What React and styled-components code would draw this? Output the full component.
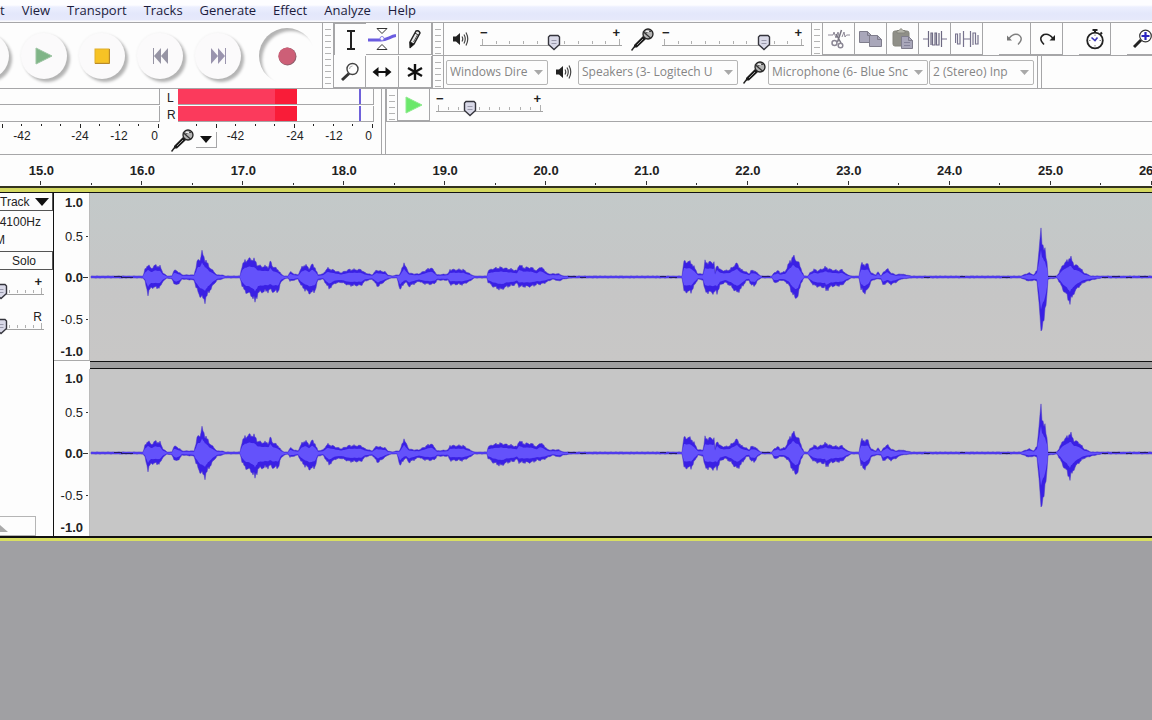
import React, { useState } from "react";
import styled, { createGlobalStyle, css } from "styled-components";

const UI_FONT = '"Open Sans", "Noto Sans", sans-serif';
const SCALE_FONT = '"Liberation Sans", Arial, sans-serif';
const EDGE = "#a6a6a8";

const GlobalStyle = createGlobalStyle`
  * { box-sizing: border-box; }
  body { margin: 0; background: #a0a0a3; overflow-x: hidden; font-family: ${SCALE_FONT}; color: #222; }
  button { font: inherit; color: inherit; padding: 0; border: 0; background: none; }
  svg { display: block; flex: none; }
`;

/* ---------- shell ---------- */

const Page = styled.div`
  min-height: 100vh;
  overflow: hidden;
`;

const MenuBar = styled.nav`
  display: flex;
  gap: 17px;
  height: 23px;
  background: linear-gradient(#fdfdff 5px, #eceffe 7px, #e3e7fb 14px, #e6e9fb 20px, #fafafc 21px);
  border-bottom: 1px solid ${EDGE};
`;

const MenuItem = styled.button`
  height: 20px;
  line-height: 20px;
  font-family: ${UI_FONT};
  font-size: 13px;
  color: #1c1c3c;
`;

const Dock = styled.header`
  background: #fdfdfd;
`;

const DockRow = styled.div`
  display: flex;
  height: 66px;
  border-bottom: 1px solid ${EDGE};
`;

const DockColumn = styled.div`
  display: flex;
  flex-direction: column;
  flex: 1;
  min-width: 0;
`;

const Bar = styled.div`
  display: flex;
  align-items: center;
  height: ${(p) => (p.$last ? 32 : 33)}px;
  border-bottom: ${(p) => (p.$last ? "none" : `1px solid ${EDGE}`)};
  overflow: hidden;
`;

const Grip = styled.div`
  flex: none;
  align-self: stretch;
  width: 12px;
  border: solid ${EDGE};
  border-width: 0 1px;
  background: repeating-linear-gradient(#fdfdfd 0 5px, #b4b4b4 5px 6px) content-box;
  padding: 1px 2px;
`;

const Spacer = styled.div`
  flex: none;
  width: ${(p) => p.$w}px;
`;

const BarEnd = styled.div`
  flex: none;
  align-self: stretch;
  width: 5px;
  border: solid ${EDGE};
  border-width: 0 1px;
`;

/* ---------- transport ---------- */

const Transport = styled.div`
  flex: none;
  display: flex;
  align-items: center;
  justify-content: flex-end;
  gap: 12px;
  width: 322px;
  padding-right: 7px;
  overflow: hidden;
`;

const RoundButton = styled.button`
  flex: none;
  display: grid;
  place-items: center;
  width: 46px;
  height: 46px;
  border-radius: 50%;
  background: #fbfafb;
  box-shadow: 3px 3px 3px #b4b4b4, 0 0 3px #f0f0f0;
  ${(p) =>
    p.$sunken &&
    css`
      width: 56px;
      height: 56px;
      margin-left: 6px;
      background: #fdfdfd;
      box-shadow: inset 4px 4px 3px -1px #b4b4b4;
    `}
`;

/* ---------- tool buttons ---------- */

const ToolGrid = styled.div`
  flex: none;
  display: grid;
  grid-template-columns: 32px 33px 33px;
  grid-template-rows: 33px 32px;
`;

const ToolButton = styled.button`
  flex: none;
  display: grid;
  place-items: center;
  width: ${(p) => (p.$fill ? "100%" : "32px")};
  height: 32px;
  border: solid ${EDGE};
  border-width: ${(p) => (p.$pressed ? "1px 0 0 1px" : "0 1px 1px 0")};
`;

/* ---------- sliders ---------- */

const SliderRoot = styled.label`
  flex: none;
  display: block;
  position: relative;
  width: ${(p) => p.$w}px;
  height: 25px;
`;

const SliderEnds = styled.span`
  display: flex;
  justify-content: space-between;
  height: 9px;
  line-height: 12px;
  font-size: ${(p) => (p.$plain ? 12 : 13)}px;
  font-weight: ${(p) => (p.$plain ? 400 : 700)};
  margin-right: 2px;
`;

const SliderInput = styled.input`
  appearance: none;
  position: absolute;
  inset: 7px 0 0 0;
  width: 100%;
  height: 18px;
  margin: 0;
  background: transparent;
  &::-webkit-slider-thumb { appearance: none; width: 13px; height: 16px; background: transparent; }
`;

const SliderThumb = styled.svg`
  position: absolute;
  top: 7px;
  margin-left: -7px;
`;

function Slider({ label, width, start, ends = ["−", "+"], plain }) {
  const [value, setValue] = useState(start);
  const ticks = Array.from({ length: 11 }, (_, i) => Math.round(2 + (i * (width - 5)) / 10));
  return (
    <SliderRoot $w={width}>
      <SliderEnds $plain={plain}>
        <span>{ends[0]}</span>
        <span>{ends[1]}</span>
      </SliderEnds>
      <svg width={width} height="12" aria-hidden="true" shapeRendering="crispEdges">
        {ticks.map((x, i) => (
          <rect key={x} x={x} y={i % 10 ? 5 : 3} width="1" height={i % 10 ? 3 : 6} fill="#b0b0b0" />
        ))}
        <rect x="0" y="9" width={width} height="1" fill="#a3a3a3" />
      </svg>
      <SliderThumb width="14" height="17" style={{ left: `${value}%` }} aria-hidden="true">
        <path d="M3 1.5H11L12.5 3V10.500L7 15.500L1.500 10.500V3Z" fill="#d9d9e8" stroke="#35353d" strokeWidth="1.4" />
        <path d="M4.500 6.500H9.500M4.500 9.500H9.500" stroke="#9a9aac" />
      </SliderThumb>
      <SliderInput
        type="range"
        min="0"
        max="100"
        value={value}
        aria-label={label}
        onChange={(e) => setValue(Number(e.target.value))}
      />
    </SliderRoot>
  );
}

/* ---------- drop-downs ---------- */

const SelectBox = styled.div`
  flex: none;
  position: relative;
  width: ${(p) => p.$w}px;
  height: 25px;
  margin-right: 1px;
`;

const SelectField = styled.select`
  appearance: none;
  width: 100%;
  height: 25px;
  padding: 0 19px 1px 3px;
  border: 1px solid #b5b5b5;
  border-radius: 2px;
  background: #fdfdfd;
  color: #858585;
  font-family: ${UI_FONT};
  font-size: 12px;
`;

const SelectArrow = styled.svg`
  position: absolute;
  right: 5px;
  top: 10px;
  pointer-events: none;
`;

function Select({ label, width, value }) {
  return (
    <SelectBox $w={width}>
      <SelectField aria-label={label} defaultValue={value}>
        <option>{value}</option>
      </SelectField>
      <SelectArrow width="9" height="5" aria-hidden="true">
        <path d="M0 0H9L4.500 5Z" fill="#a9a9a9" />
      </SelectArrow>
    </SelectBox>
  );
}

/* ---------- icons ---------- */

const Icon = ({ w = 24, h = 24, children }) => (
  <svg width={w} height={h} viewBox={`0 0 ${w} ${h}`} fill="none" aria-hidden="true">
    {children}
  </svg>
);

const PlayIcon = ({ w = 18, fill = "#7fb587", edge = "#9cc4a2" }) => (
  <Icon w={w} h={18}>
    <path d={`M1 1L${w - 1} 9L1 17Z`} fill={fill} stroke={edge} />
  </Icon>
);
const PauseIcon = () => (
  <Icon w={16} h={16}><path d="M2 1H6V15H2ZM10 1H14V15H10Z" fill="#8888b0" /></Icon>
);
const StopIcon = () => (
  <Icon w={16} h={16}>
    <rect x="1" y="1" width="14" height="14" fill="#f7c325" stroke="#dfae2c" />
    <path d="M1 15.5H15.5V1" stroke="#b98a2a" />
  </Icon>
);
const SkipStartIcon = () => (
  <Icon w={16} h={16}>
    <path d="M1.5 0V16" stroke="#9694a4" />
    <path d="M9 0V16L2 8ZM16 0V16L9 8Z" fill="#9694a4" />
  </Icon>
);
const SkipEndIcon = () => (
  <Icon w={16} h={16}>
    <path d="M15.5 0V16" stroke="#9a94ae" />
    <path d="M1 0V16L8 8ZM8 0V16L15 8Z" fill="#9a94ae" />
  </Icon>
);
const RecordIcon = () => (
  <Icon w={20} h={20}>
    <circle cx="10.5" cy="10.5" r="9" fill="#8d5f6c" />
    <circle cx="10" cy="10" r="8.6" fill="#cd5f77" />
  </Icon>
);
const SelectionIcon = () => (
  <Icon w={22} h={22}><path d="M7 2H15M11 2V20M7 20H15" stroke="#222" strokeWidth="2" /></Icon>
);
const EnvelopeIcon = () => (
  <Icon w={28} h={24}>
    <path d="M9 1.500H19L14 6.500Z" fill="#fff" stroke="#333" />
    <path d="M9 22.500H19L14 17.500Z" fill="#fff" stroke="#333" />
    <path d="M0 13H13C19 13 22 9.500 28 8.500" stroke="#6a5ce0" strokeWidth="3" />
    <circle cx="14" cy="11.500" r="2" fill="#fff" stroke="#8c80e8" />
  </Icon>
);
const DrawIcon = () => (
  <Icon w={20} h={22}>
    <path d="M5 14L11 3Q14 2 15 5L9 16L5.500 19Z" fill="#e8e8e8" stroke="#222" strokeWidth="1.500" />
    <path d="M5 14L9 16L5 20ZM10 5L14 7.500" fill="#111" stroke="#222" />
    <path d="M8.500 14L13 6" stroke="#555" />
  </Icon>
);
const MagnifierIcon = () => (
  <Icon w={20} h={20}>
    <path d="M2 18L9 11.500" stroke="#333" strokeWidth="3" />
    <circle cx="12.500" cy="7" r="5.500" fill="#fff" stroke="#444" strokeWidth="1.400" />
    <path d="M9.500 7Q9.500 4 12.500 4" stroke="#aaa" />
  </Icon>
);
const TimeShiftIcon = () => (
  <Icon w={20} h={12}>
    <path d="M3 6H17" stroke="#111" strokeWidth="2" />
    <path d="M6.500 1V11L0.500 6ZM13.500 1V11L19.500 6Z" fill="#111" />
  </Icon>
);
const MultiToolIcon = () => (
  <Icon w={18} h={18}>
    <path d="M9 1V17M2 5L16 13M16 5L2 13" stroke="#111" strokeWidth="2.400" />
  </Icon>
);
const SpeakerIcon = () => (
  <Icon w={18} h={16}>
    <path d="M1 5.500H4L8 2V14L4 10.500H1Z" fill="#222" />
    <path d="M10 5.500Q11.500 8 10 10.500M12 3.500Q14.500 8 12 12.500M14 1.500Q17.500 8 14 14.500" stroke="#444" strokeWidth="1.200" />
  </Icon>
);
const MicIcon = () => (
  <Icon w={23} h={23}>
    <path d="M0.500 22.500L4 18" stroke="#222" strokeWidth="1.500" />
    <path d="M3 17L12 8L15 11L6 19.500L3 19.500Z" fill="#1b1b1b" />
    <path d="M6 17L12 11" stroke="#999" />
    <circle cx="17" cy="6" r="5" fill="#b5b5b5" stroke="#222" strokeWidth="1.300" />
    <path d="M12 3.500L20 10.500M14 6Q17 2 20 3.500" stroke="#333" strokeWidth="1.200" />
    <path d="M15 3.500H18" stroke="#eee" strokeWidth="1.500" />
  </Icon>
);
const CutIcon = () => (
  <Icon w={24} h={20}>
    <path d="M1 6H6L7 3L9 9L11 3L12 7M15 8L17 3L18 8L19.500 6H23" stroke="#8f8a98" />
    <path d="M14.500 1L10.500 13M9 5L14 14" stroke="#777480" strokeWidth="1.500" />
    <circle cx="7.500" cy="14" r="2.500" stroke="#8a8694" strokeWidth="1.500" />
    <circle cx="13.500" cy="16.500" r="2.300" stroke="#8a8694" strokeWidth="1.500" />
  </Icon>
);
const Doc = ({ x, y, w, h }) => (
  <g>
    <path d={`M${x} ${y}H${x + w - 4}L${x + w} ${y + 4}V${y + h}H${x}Z`} fill="#a9a7ba" stroke="#7f7d8c" />
    <path d={`M${x + w - 4} ${y}V${y + 4}H${x + w}`} stroke="#7f7d8c" />
  </g>
);
const CopyIcon = () => (
  <Icon w={24} h={18}>
    <Doc x={0.5} y={1.5} w={12} h={11} />
    <Doc x={10.5} y={5.5} w={12} h={11} />
  </Icon>
);
const PasteIcon = () => (
  <Icon w={22} h={22}>
    <rect x="1" y="3" width="16" height="15" rx="2" fill="#8f8f88" stroke="#84847c" />
    <path d="M5 5V2.500H7L9 0.500L11 2.500H13V5Z" fill="#b5b5ac" stroke="#84847c" />
    <Doc x={9.5} y={8.5} w={11} h={12} />
    <path d="M12 14.500H18M12 17.500H18" stroke="#85839a" />
  </Icon>
);
const TrimIcon = () => (
  <Icon w={24} h={18}>
    <path d="M0 9H5M19 9H24" stroke="#77738e" />
    <path d="M5.500 1V17M8 15V3H9.500V15H12V3H13.500V15H16V3M18.500 1V17" stroke="#6d6982" strokeWidth="1.200" />
  </Icon>
);
const SilenceIcon = () => (
  <Icon w={24} h={18}>
    <path d="M0.500 13V4H2.500V14H5V3M8.500 1V17M8.500 9H15.500M15.500 1V17M18 15V3H20.500V14H23V5" stroke="#77738e" strokeWidth="1.200" />
  </Icon>
);
const UndoIcon = () => (
  <Icon w={18} h={14}>
    <path d="M3 6.500Q7 1 12 2.500Q18.500 6 12 12.500" stroke="#808080" strokeWidth="1.400" />
    <path d="M1 3.500V8.500H6Z" fill="#777" />
  </Icon>
);
const RedoIcon = () => (
  <Icon w={18} h={14}>
    <path d="M15 6.500Q11 1 6 2.500Q-0.500 6 6 12.500" stroke="#222" strokeWidth="1.500" />
    <path d="M17 3V8.500H11.500Z" fill="#222" />
  </Icon>
);
const TimerIcon = () => (
  <Icon w={20} h={22}>
    <path d="M7.500 2H12.500M10 1V5M15.500 4.500L17 6" stroke="#222" strokeWidth="2" />
    <circle cx="10" cy="12.500" r="7.800" fill="#fff" stroke="#222" strokeWidth="1.800" />
    <path d="M6.500 9.500L10 12.500L12.500 9.500" stroke="#3a35b8" strokeWidth="1.600" />
    <path d="M10 6.500V8M10 17V18.500M4 12.500H5.500M14.500 12.500H16" stroke="#888" />
  </Icon>
);
const ZoomInIcon = () => (
  <Icon w={20} h={20}>
    <path d="M1 18L8 11" stroke="#222" strokeWidth="3" />
    <circle cx="12.500" cy="7" r="5.800" fill="#fff" stroke="#333" strokeWidth="1.200" />
    <path d="M8.500 7H16.500M12.500 3V11" stroke="#2a25c0" strokeWidth="2.200" />
  </Icon>
);

/* ---------- level meters ---------- */

const Meters = styled.div`
  flex: none;
  display: flex;
  width: 386px;
  border-right: 1px solid ${EDGE};
`;

const PlayMeter = styled.section`
  width: 160px;
`;

const RecordMeter = styled.section`
  width: 222px;
  padding-left: 7px;
  border-right: 1px solid ${EDGE};
`;

const ChannelRow = styled.div`
  display: flex;
  height: 16px;
  margin-bottom: 1px;
  padding-right: ${(p) => (p.$inset ? 7 : 0)}px;
`;

const ChannelName = styled.span`
  width: 11px;
  line-height: 18px;
  font-size: 12px;
`;

const LevelTrack = styled.div`
  flex: 1;
  display: flex;
  border: solid ${EDGE};
  border-width: 0 1px 1px 0;
`;

const LevelFill = styled.div`
  width: ${(p) => p.$w}px;
  background: ${(p) => p.$color};
`;

const PeakHold = styled.div`
  width: 2px;
  margin-left: 62px;
  background: #6f61da;
`;

const MeterTicks = styled.div`
  display: flex;
  justify-content: flex-end;
  height: 8px;
`;

const MeterFoot = styled.div`
  display: flex;
  align-items: center;
  height: 18px;
`;

const MeterLabel = styled.span`
  flex: none;
  width: ${(p) => p.$w}px;
  text-align: ${(p) => p.$align || "center"};
  font-size: 12px;
  line-height: 14px;
  margin-bottom: 8px;
`;

const MeterMenu = styled.button`
  flex: none;
  display: grid;
  place-items: center;
  width: 21px;
  height: 16px;
  border: solid ${EDGE};
  border-width: 0 1px 1px 0;
`;

const TICKS = [-176, -156, -137, -117, -98, -78, -59, -39, -20, 0];

const Ticks = ({ width, count }) => (
  <svg width={width} height="8" shapeRendering="crispEdges" aria-hidden="true">
    {TICKS.slice(-count).map((offset, i) => {
      const major = (count - 1 - i) % 4 === 0;
      return <rect key={offset} x={width - 2 + offset} y="1" width="1" height={major ? 4 : 2} fill="#222" />;
    })}
  </svg>
);

/* ---------- timeline ---------- */

const Timeline = styled.div`
  overflow: hidden;
  background: #fdfdfd;
  border-bottom: 2px solid #33331f;
`;

const TimelineGrid = styled.div`
  display: grid;
  grid-template-columns: repeat(12, 1fr);
  width: calc(100% + 59px);
  height: 31px;
  margin-left: -9px;
`;

const Second = styled.div`
  display: grid;
  grid-template-columns: 1fr 1px;
  grid-template-rows: 26px 5px;
  justify-items: center;
  font-size: 13px;
  font-weight: 700;
  line-height: 32px;
`;

const SecondLabel = styled.span`
  grid-column: 1 / 3;
`;

const Tick = styled.i`
  width: 1px;
  height: ${(p) => (p.$minor ? 2 : 4)}px;
  margin-top: ${(p) => (p.$minor ? 2 : 0)}px;
  background: #333;
`;

/* ---------- track ---------- */

const TrackFrame = styled.main`
  border: solid #d9df62;
  border-width: 4px 0 3px;
  border-top-color: #d3d860;
`;

const Track = styled.div`
  display: flex;
  height: 346px;
  border: solid #111;
  border-width: 1px 0 2px;
  background: #fdfdfd;
`;

const TrackPanel = styled.aside`
  flex: none;
  display: flex;
  flex-direction: column;
  width: 54px;
  border-right: 1px solid #111;
  overflow: hidden;
  font-size: 12px;
`;

const TrackTitle = styled.button`
  display: flex;
  align-items: center;
  justify-content: space-between;
  height: 18px;
  padding-right: 3px;
  border: solid #555;
  border-width: 0 1px 1px 0;
`;

const TrackFormat = styled.div`
  height: 40px;
  padding-top: 2px;
  line-height: 18px;
`;

const FormatLine = styled.div`
  display: flex;
  justify-content: flex-end;
  width: ${(p) => p.$w}px;
  overflow: hidden;
`;

const SoloButton = styled.button`
  height: 19px;
  padding-right: 4px;
  border: solid #555;
  border-width: 1px 1px 1px 0;
`;

const PanelSlider = styled.div`
  display: flex;
  justify-content: flex-end;
  width: 44px;
  height: 35px;
  padding-top: 6px;
`;

const CollapseButton = styled.button`
  width: 36px;
  height: 20px;
  margin-top: auto;
  padding-top: 4px;
  border: solid #b5b5b5;
  border-width: 1px 1px 1px 0;
`;

const Channels = styled.div`
  flex: 1;
  min-width: 0;
`;

const Channel = styled.section`
  display: flex;
  height: ${(p) => (p.$first ? 176 : 167)}px;
`;

const LevelRuler = styled.div`
  display: grid;
  grid-template-rows: 18px 50px 33px 50px 15px;
  align-items: center;
  align-content: start;
  width: 36px;
  height: 167px;
  border-right: 1px solid #bbb;
  font-size: 13px;
`;

const LevelMark = styled.div`
  display: flex;
  align-items: center;
  justify-content: flex-end;
  padding-right: ${(p) => (p.$edge ? 6 : 0)}px;
  font-weight: ${(p) => (p.$strong ? 700 : 400)};
  &::after {
    content: "";
    display: ${(p) => (p.$edge ? "none" : "block")};
    width: ${(p) => (p.$strong ? 5 : 2)}px;
    height: 1px;
    margin-right: 1px;
    margin-left: ${(p) => (p.$strong ? 0 : 3)}px;
    background: #333;
  }
`;

const RulerColumn = styled.div`
  flex: none;
  width: 36px;
  height: 168px;
  border-bottom: ${(p) => (p.$first ? "1px solid #aaa" : "none")};
`;

const WaveArea = styled.div`
  flex: 1;
  min-width: 0;
`;

const WaveCanvas = styled.div`
  height: ${(p) => (p.$first ? 168 : 167)}px;
  overflow: hidden;
  background: ${(p) => (p.$first ? "linear-gradient(#c3c9c9, #c6c6c6 60%, #c8c7c6)" : "#c6c6c6")};
`;

const Divider = styled.div`
  height: 8px;
  background: #9f9f9f;
  border: solid #111;
  border-width: 1px 0;
`;

/* x position, peak above the axis, peak below the axis */
const ENVELOPE = [
  [0,1,1],[20,1,1],[40,1,1],[52,1,1],[54,7,4],[57,12,16],[60,8,10],[64,11,10],[69,10,10],[72,4,4],[76,1,1],[81,1,2],[83,7,6],[85,6,8],[89,4,5],[91,2,2],
  [103,2,3],[105,9,10],[107,17,14],[109,17,18],[111,23,20],[114,17,22],[118,10,14],[122,6,8],[126,2,3],[131,2,2],[134,1,1],[149,1,1],[151,11,8],[154,15,14],
  [157,17,15],[162,17,19],[164,15,24],[167,11,15],[172,10,14],[178,10,13],[179,15,12],[182,10,14],[187,7,14],[190,3,5],[193,1,2],[197,1,1],[199,5,4],[203,3,3],
  [207,2,2],[210,8,8],[214,12,12],[218,8,15],[221,12,15],[224,9,13],[227,2,3],[232,3,2],[236,8,8],[238,8,11],[244,6,6],[250,4,5],[258,7,8],[270,7,8],[274,4,4],
  [281,2,2],[286,7,8],[287,6,9],[294,5,4],[297,2,2],[301,1,1],[306,2,1],[308,2,8],[309,3,13],[311,8,9],[313,14,6],[315,9,5],[318,4,9],[322,3,7],[328,3,4],
  [332,5,6],[340,9,7],[344,5,6],[346,2,3],[357,3,3],[359,7,7],[372,7,7],[379,3,4],[383,1,1],[396,1,1],[397,6,5],[402,8,9],[410,9,12],[416,8,9],[422,7,8],
  [426,6,6],[428,12,9],[432,9,9],[440,9,9],[446,6,7],[449,10,7],[453,7,6],[457,3,4],[462,3,2],[468,3,4],[472,1,2],[480,1,1],[510,1,1],[570,1,1],[591,1,1],
  [593,15,14],[600,14,14],[604,8,7],[607,3,2],[612,3,3],[614,14,14],[623,14,15],[624,4,14],[626,12,15],[629,7,8],[634,6,5],[639,7,8],[642,10,11],[646,13,15],
  [650,7,11],[655,5,4],[658,3,3],[660,6,8],[664,6,8],[667,3,3],[670,1,1],[681,1,1],[683,4,5],[687,6,5],[689,4,3],[694,5,4],[698,13,8],[702,20,17],[704,17,20],
  [707,15,18],[710,8,6],[713,1,1],[717,1,1],[719,4,4],[723,7,8],[727,6,9],[734,9,10],[735,9,13],[740,7,9],[748,6,8],[751,7,8],[755,3,4],[760,1,1],[768,1,1],
  [770,12,12],[773,12,15],[777,12,12],[780,4,4],[785,2,2],[787,5,2],[790,1,2],[792,4,8],[796,8,5],[800,4,7],[805,2,5],[810,3,2],[820,1,1],[870,1,1],[930,1,1],
  [938,4,4],[943,2,3],[946,7,4],[948,25,25],[950,44,56],[951,35,45],[954,24,36],[956,14,17],[957,1,2],[966,1,1],[969,6,6],[972,12,12],[976,15,18],[979,19,24],
  [983,12,15],[988,10,9],[993,4,5],[1000,1,3],[1010,1,1],[1030,1,1],[1062,1,1],
];

const QUIET = [[24, 8], [31, 12], [478, 8], [490, 6], [570, 6], [579, 8], [672, 8], [834, 6], [870, 5], [912, 8], [958, 8], [1012, 6], [1022, 8], [1036, 6], [1050, 8]];

function buildWave(scale, rough) {
  const top = [];
  const bottom = [];
  let k = 0;
  for (let x = 0; x <= 1062; x += 1) {
    while (k < ENVELOPE.length - 2 && ENVELOPE[k + 1][0] <= x) k += 1;
    const [x0, u0, d0] = ENVELOPE[k];
    const [x1, u1, d1] = ENVELOPE[k + 1];
    const t = Math.min(1, (x - x0) / (x1 - x0));
    const wobble = 1 + rough * Math.sin(x * 2.3) * Math.cos(x * 1.1);
    const up = (u0 + (u1 - u0) * t) * scale * wobble;
    const down = (d0 + (d1 - d0) * t) * scale * (2 - wobble);
    top.push(`${x + 1} ${(84 - Math.max(0.6, up)).toFixed(1)}`);
    bottom.unshift(`${x + 1} ${(84 + Math.max(0.6, down)).toFixed(1)}`);
  }
  return `M${top.join("L")}L${bottom.join("L")}Z`;
}

const PEAK_PATH = buildWave(1.04, 0.18);
const RMS_PATH = buildWave(0.6, 0.06);

const Waveform = () => (
  <svg width="100%" height="168" viewBox="0 0 1062 168" preserveAspectRatio="none" role="img" aria-label="Waveform">
    <path d={PEAK_PATH} fill="#3a20e4" stroke="#4a38c8" strokeWidth="0.5" />
    <path d={RMS_PATH} fill="#6452fb" />
    {QUIET.map(([x, w], i) => (
      <rect key={x} x={x} y={i % 2 ? 84 : 83} width={w} height="1" fill="#241a6c" />
    ))}
  </svg>
);

const LEVELS = ["1.0", "0.5", "0.0", "-0.5", "-1.0"];

function ChannelView({ first }) {
  return (
    <Channel $first={first}>
      <RulerColumn $first={first}>
        <LevelRuler>
          {LEVELS.map((level, i) => (
            <LevelMark key={level} $edge={i === 0 || i === 4} $strong={i % 2 === 0}>{level}</LevelMark>
          ))}
        </LevelRuler>
      </RulerColumn>
      <WaveArea>
        <WaveCanvas $first={first}><Waveform /></WaveCanvas>
        {first && <Divider />}
      </WaveArea>
    </Channel>
  );
}

/* ---------- application ---------- */

const MENUS = ["t", "View", "Transport", "Tracks", "Generate", "Effect", "Analyze", "Help"];
const SECONDS = ["15.0", "16.0", "17.0", "18.0", "19.0", "20.0", "21.0", "22.0", "23.0", "24.0", "25.0", "26.0"];
const TRANSPORT = [["Pause", PauseIcon], ["Play", PlayIcon], ["Stop", StopIcon], ["Skip to start", SkipStartIcon], ["Skip to end", SkipEndIcon]];
const TOOLS = [["Selection", SelectionIcon], ["Envelope", EnvelopeIcon], ["Draw", DrawIcon], ["Zoom", MagnifierIcon], ["Time shift", TimeShiftIcon], ["Multi-tool", MultiToolIcon]];
const EDIT = [["Cut", CutIcon], ["Copy", CopyIcon], ["Paste", PasteIcon], ["Trim", TrimIcon], ["Silence", SilenceIcon], null, ["Undo", UndoIcon], ["Redo", RedoIcon], null, ["Timer", TimerIcon], null, ["Zoom in", ZoomInIcon]];

export default function App() {
  return (
    <Page>
      <GlobalStyle />
      <MenuBar>
        {MENUS.map((name) => <MenuItem key={name}>{name}</MenuItem>)}
      </MenuBar>

      <Dock>
        <DockRow>
          <Transport>
            {TRANSPORT.map(([name, Glyph]) => (
              <RoundButton key={name} aria-label={name}><Glyph /></RoundButton>
            ))}
            <RoundButton aria-label="Record" $sunken><RecordIcon /></RoundButton>
          </Transport>
          <Grip />
          <ToolGrid>
            {TOOLS.map(([name, Glyph], i) => (
              <ToolButton key={name} aria-label={name} $fill $pressed={i === 0}><Glyph /></ToolButton>
            ))}
          </ToolGrid>
          <DockColumn>
            <Bar>
              <Grip />
              <Spacer $w={8} />
              <SpeakerIcon />
              <Spacer $w={10} />
              <Slider label="Output volume" width={142} start={52} />
              <Spacer $w={9} />
              <MicIcon />
              <Spacer $w={8} />
              <Slider label="Input volume" width={142} start={72} />
              <Spacer $w={7} />
              <Grip />
              {EDIT.map((item, i) => {
                if (!item) return <Spacer key={i} $w={16} />;
                const [name, Glyph] = item;
                return <ToolButton key={name} aria-label={name}><Glyph /></ToolButton>;
              })}
            </Bar>
            <Bar $last>
              <Grip />
              <Spacer $w={2} />
              <Select label="Audio host" width={102} value="Windows Dire" />
              <Spacer $w={6} />
              <SpeakerIcon />
              <Spacer $w={5} />
              <Select label="Output device" width={160} value="Speakers (3- Logitech U" />
              <Spacer $w={4} />
              <MicIcon />
              <Spacer $w={2} />
              <Select label="Input device" width={160} value="Microphone (6- Blue Snc" />
              <Select label="Input channels" width={105} value="2 (Stereo) Inp" />
              <Spacer $w={2} />
              <BarEnd />
            </Bar>
          </DockColumn>
        </DockRow>

        <DockRow>
          <Meters>
            <PlayMeter aria-label="Playback level">
              <ChannelRow><LevelTrack /></ChannelRow>
              <ChannelRow><LevelTrack /></ChannelRow>
              <MeterTicks><Ticks width={160} count={9} /></MeterTicks>
              <MeterFoot>
                <MeterLabel $w={44}>-42</MeterLabel>
                <Spacer $w={14} />
                <MeterLabel $w={44}>-24</MeterLabel>
                <MeterLabel $w={34}>-12</MeterLabel>
                <MeterLabel $w={22} $align="right">0</MeterLabel>
              </MeterFoot>
            </PlayMeter>
            <RecordMeter aria-label="Recording level">
              {["L", "R"].map((name) => (
                <ChannelRow key={name} $inset>
                  <ChannelName>{name}</ChannelName>
                  <LevelTrack>
                    <LevelFill $w={97} $color="#fb3a5c" />
                    <LevelFill $w={22} $color="#f91c38" />
                    <PeakHold />
                  </LevelTrack>
                </ChannelRow>
              ))}
              <MeterTicks><Ticks width={206} count={10} /><Spacer $w={7} /></MeterTicks>
              <MeterFoot>
                <Spacer $w={4} />
                <MicIcon />
                <Spacer $w={2} />
                <MeterMenu aria-label="Meter options">
                  <Icon w={12} h={7}><path d="M0 0H12L6 7Z" fill="#111" /></Icon>
                </MeterMenu>
                <MeterLabel $w={37}>-42</MeterLabel>
                <Spacer $w={20} />
                <MeterLabel $w={42}>-24</MeterLabel>
                <MeterLabel $w={36}>-12</MeterLabel>
                <MeterLabel $w={20} $align="right">0</MeterLabel>
              </MeterFoot>
            </RecordMeter>
          </Meters>
          <DockColumn>
            <Bar>
              <Grip />
              <ToolButton aria-label="Play at speed"><PlayIcon fill="#6be86b" edge="#8eea8e" /></ToolButton>
              <Spacer $w={6} />
              <Slider label="Playback speed" width={107} start={32} />
            </Bar>
            <Bar $last />
          </DockColumn>
        </DockRow>
      </Dock>

      <Timeline>
        <TimelineGrid>
          {SECONDS.map((second) => (
            <Second key={second}>
              <SecondLabel>{second}</SecondLabel>
              <Tick />
              <Tick $minor />
            </Second>
          ))}
        </TimelineGrid>
      </Timeline>

      <TrackFrame>
        <Track>
          <TrackPanel>
            <TrackTitle>
              Track
              <Icon w={14} h={8}><path d="M0 0H14L7 8Z" fill="#111" /></Icon>
            </TrackTitle>
            <TrackFormat>
              <FormatLine $w={41}>4100Hz</FormatLine>
              <FormatLine $w={5}>M</FormatLine>
            </TrackFormat>
            <SoloButton>Solo</SoloButton>
            <PanelSlider><Slider label="Gain" width={86} start={50} ends={["", "+"]} /></PanelSlider>
            <PanelSlider><Slider label="Pan" width={86} start={50} ends={["", "R"]} plain /></PanelSlider>
            <CollapseButton aria-label="Collapse track">
              <Icon w={8} h={7}><path d="M-8 7L0 0L8 7Z" fill="#aaa" /></Icon>
            </CollapseButton>
          </TrackPanel>
          <Channels>
            <ChannelView first />
            <ChannelView />
          </Channels>
        </Track>
      </TrackFrame>
    </Page>
  );
}
